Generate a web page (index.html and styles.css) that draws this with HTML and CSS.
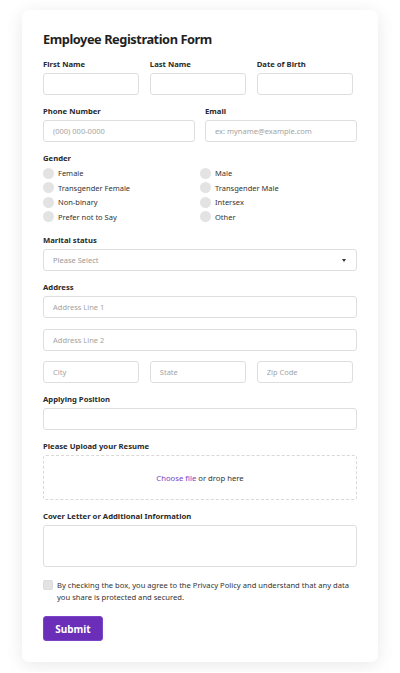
FILE: index.html
```html
<!DOCTYPE html>
<html lang="en">
<head>
<meta charset="utf-8">
<title>Employee Registration Form</title>
<link rel="stylesheet" href="styles.css">
</head>
<body>
<form class="card">
  <h1 class="title">Employee Registration Form</h1>

  <div class="row three">
    <div class="field"><label class="label">First Name</label><input class="input" type="text"></div>
    <div class="field"><label class="label">Last Name</label><input class="input" type="text"></div>
    <div class="field"><label class="label">Date of Birth</label><input class="input" type="text"></div>
  </div>

  <div class="row two">
    <div class="field"><label class="label">Phone Number</label><input class="input" type="text" placeholder="(000) 000-0000"></div>
    <div class="field"><label class="label">Email</label><input class="input" type="text" placeholder="ex: myname@example.com"></div>
  </div>

  <div class="group">
    <div class="label">Gender</div>
    <div class="radios">
      <label class="opt"><input class="radio" type="radio" name="g"><span>Female</span></label>
      <label class="opt"><input class="radio" type="radio" name="g"><span>Male</span></label>
      <label class="opt"><input class="radio" type="radio" name="g"><span>Transgender Female</span></label>
      <label class="opt"><input class="radio" type="radio" name="g"><span>Transgender Male</span></label>
      <label class="opt"><input class="radio" type="radio" name="g"><span>Non-binary</span></label>
      <label class="opt"><input class="radio" type="radio" name="g"><span>Intersex</span></label>
      <label class="opt"><input class="radio" type="radio" name="g"><span>Prefer not to Say</span></label>
      <label class="opt"><input class="radio" type="radio" name="g"><span>Other</span></label>
    </div>
  </div>

  <div class="group">
    <div class="label">Marital status</div>
    <div class="select"><span class="ph">Please Select</span><span class="caret"></span></div>
  </div>

  <div class="group">
    <div class="label">Address</div>
    <input class="input" type="text" placeholder="Address Line 1">
    <input class="input spaced" type="text" placeholder="Address Line 2">
    <div class="row three inner">
      <input class="input" type="text" placeholder="City">
      <input class="input" type="text" placeholder="State">
      <input class="input" type="text" placeholder="Zip Code">
    </div>
  </div>

  <div class="group">
    <div class="label">Applying Position</div>
    <input class="input" type="text">
  </div>

  <div class="group">
    <div class="label">Please Upload your Resume</div>
    <div class="drop"><span class="link">Choose file</span>&nbsp;or drop here</div>
  </div>

  <div class="group">
    <div class="label">Cover Letter or Additional Information</div>
    <div class="textarea"></div>
  </div>

  <label class="consent"><input class="check" type="checkbox"><span>By checking the box, you agree to the Privacy Policy and understand that any data you share is protected and secured.</span></label>

  <button class="submit" type="button">Submit</button>
</form>
</body>
</html>
```

FILE: styles.css
```css
* { box-sizing: border-box; }
html, body { margin: 0; padding: 0; }
body {
  background: #ffffff;
  font-family: "Noto Sans", "Open Sans", sans-serif;
  color: #2c2c2c;
  padding: 10px 22px 10px 22px;
}
.card {
  width: 356px;
  background: #fff;
  border-radius: 7px;
  box-shadow: 0 3px 18px rgba(0, 0, 0, 0.09);
  padding: 20px 21px 21px 21px;
  display: flex;
  flex-direction: column;
}
.title {
  margin: 0;
  font-size: 12.8px;
  line-height: 18px;
  font-weight: 700;
  letter-spacing: -0.45px;
  color: #1f1f1f;
}
.label {
  display: block;
  font-size: 7.7px;
  line-height: 12px;
  font-weight: 700;
  color: #2a2a2a;
  margin-bottom: 3px;
}
.row { display: grid; margin-top: 10px; }
.row.three { grid-template-columns: 1fr 1fr 1fr; column-gap: 10.5px; padding-right: 4px; }
.row.two { grid-template-columns: 1fr 1fr; column-gap: 10px; }
.row.inner { margin-top: 10px; }
.field { display: flex; flex-direction: column; min-width: 0; }
.input {
  display: block;
  width: 100%;
  height: 22px;
  margin: 0;
  border: 1px solid #dedede;
  border-radius: 3px;
  background: #fff;
  padding: 0 9px;
  font-family: inherit;
  font-size: 7.5px;
  color: #333;
  outline: none;
}
.input::placeholder { color: #a3a3a3; }
.input.spaced { margin-top: 11px; }
.group { margin-top: 10px; display: flex; flex-direction: column; }
.radios {
  display: grid;
  grid-template-columns: 1fr 1fr;
  margin-top: -1px;
}
.opt {
  display: flex;
  align-items: center;
  height: 14.5px;
  font-size: 7.5px;
  color: #333;
}
.radio {
  appearance: none;
  -webkit-appearance: none;
  width: 11px;
  height: 11px;
  margin: 0 4px 0 0;
  border-radius: 50%;
  background: #e3e3e3;
  border: none;
  flex: none;
}
.select {
  height: 22px;
  border: 1px solid #dedede;
  border-radius: 3px;
  display: flex;
  align-items: center;
  justify-content: space-between;
  padding: 0 10px 0 9px;
  font-size: 7.5px;
}
.ph { color: #9a9a9a; }
.caret {
  width: 0;
  height: 0;
  border-left: 2.5px solid transparent;
  border-right: 2.5px solid transparent;
  border-top: 3px solid #333;
}
.drop {
  height: 45px;
  border: 1px dashed #d8d8d8;
  border-radius: 3px;
  display: flex;
  align-items: center;
  justify-content: center;
  font-size: 7.7px;
  color: #333;
}
.link { color: #7a3fc4; }
.textarea {
  height: 42px;
  border: 1px solid #dedede;
  border-radius: 3px;
}
.consent {
  display: flex;
  align-items: flex-start;
  margin-top: 12px;
  font-size: 7.6px;
  line-height: 12px;
  color: #333;
}
.check {
  appearance: none;
  -webkit-appearance: none;
  flex: none;
  width: 10px;
  height: 10px;
  margin: 1px 4px 0 0;
  border-radius: 2px;
  background: #e3e3e3;
  border: 1px solid #dcdcdc;
}
.submit {
  align-self: flex-start;
  margin-top: 13px;
  width: 60px;
  height: 25px;
  border: 1px solid #7b45c8;
  border-radius: 3px;
  background: #6a2eb9;
  color: #fff;
  font-family: inherit;
  font-size: 10px;
  font-weight: 700;
  padding: 0;
}
```
